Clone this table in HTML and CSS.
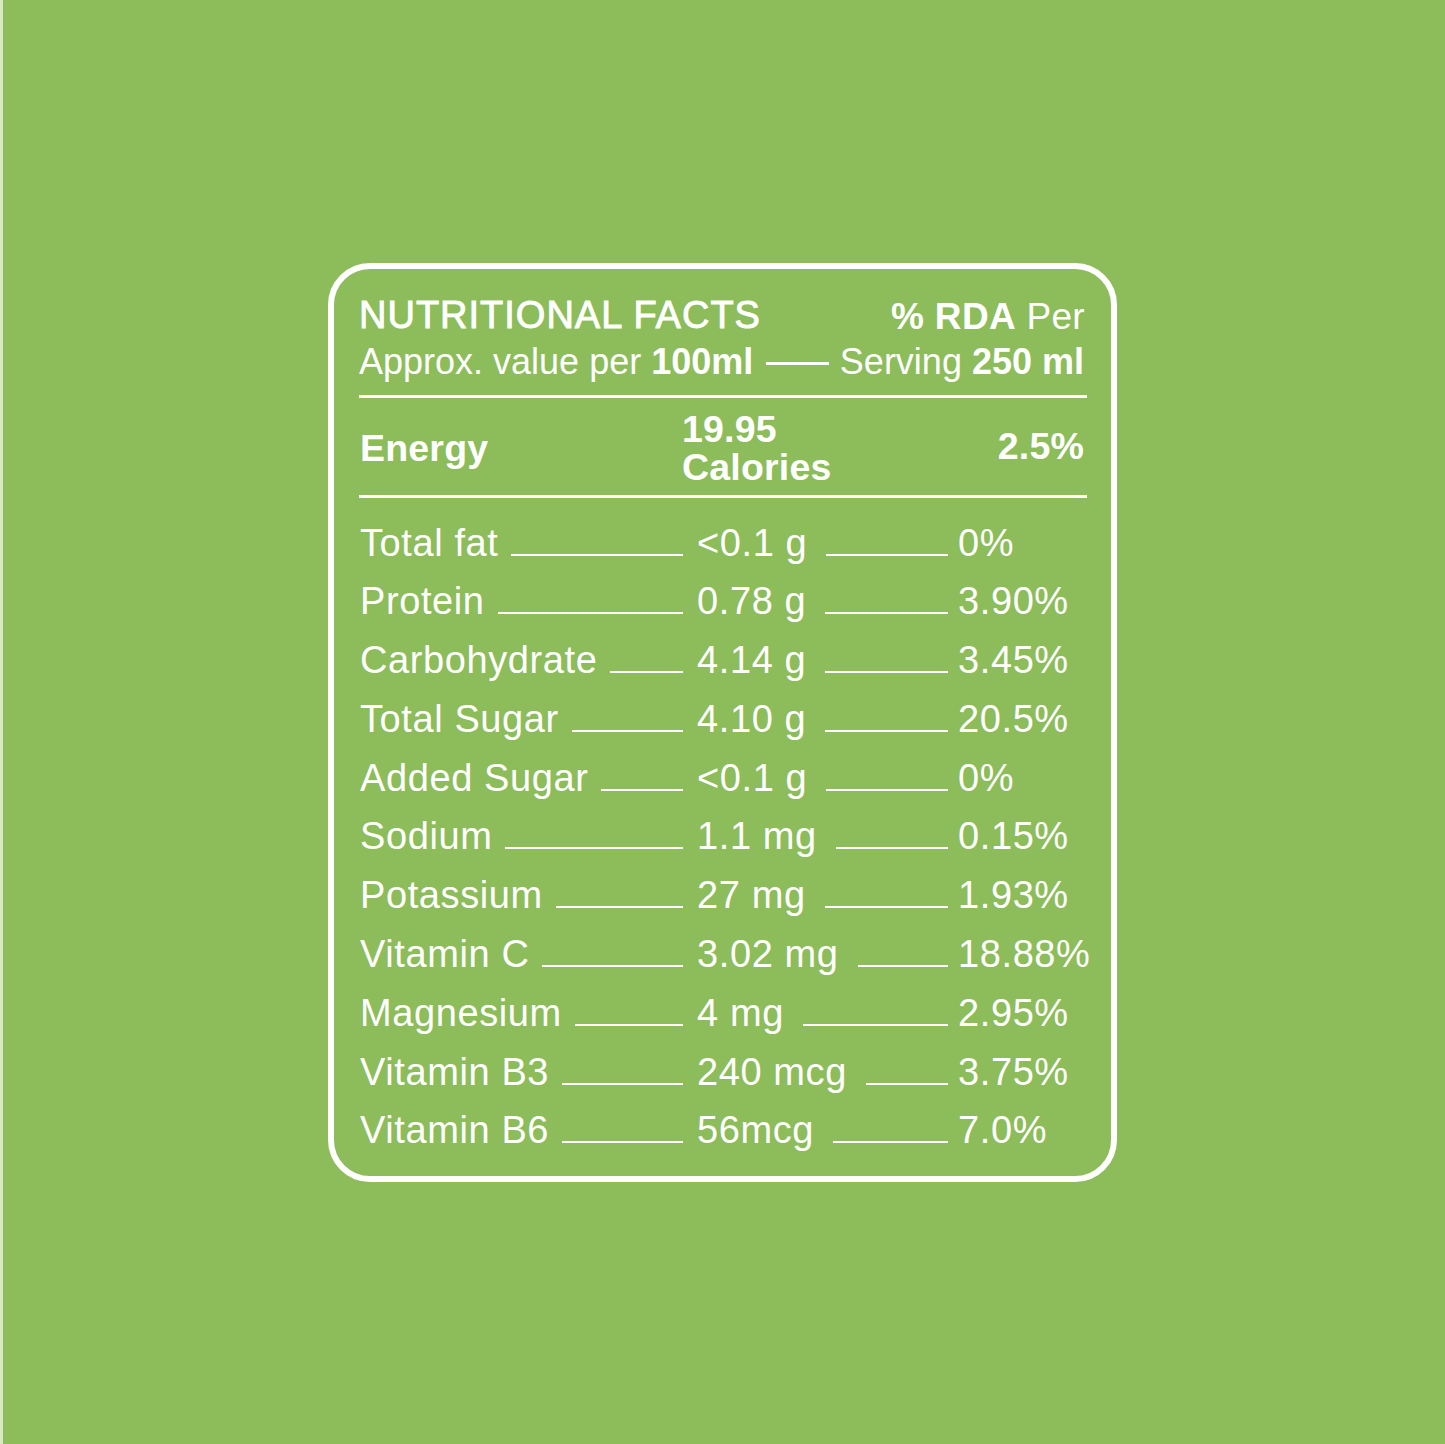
FILE: index.html
```html
<!DOCTYPE html>
<html lang="en">
<head>
<meta charset="utf-8">
<title>Nutritional Facts</title>
<link rel="stylesheet" href="styles.css">
</head>
<body>
<main class="page">
  <section class="card">
    <header class="head">
      <div class="head-top">
        <h1 class="title">NUTRITIONAL FACTS</h1>
        <p class="rda"><b>% RDA</b> Per</p>
      </div>
      <div class="head-sub">
        <span>Approx. value per <b>100ml</b></span>
        <span class="dash"></span>
        <span>Serving <b>250 ml</b></span>
      </div>
    </header>
    <div class="energy">
      <span class="e-name">Energy</span>
      <span class="e-val">19.95<br>Calories</span>
      <span class="e-pct">2.5%</span>
    </div>
    <ul class="rows">
      <li class="row"><span class="cell"><span class="txt">Total fat</span><span class="lead"></span></span><span class="cell"><span class="txt">&lt;0.1 g</span><span class="lead lead2"></span></span><span class="pct">0%</span></li>
      <li class="row"><span class="cell"><span class="txt">Protein</span><span class="lead"></span></span><span class="cell"><span class="txt">0.78 g</span><span class="lead lead2"></span></span><span class="pct">3.90%</span></li>
      <li class="row"><span class="cell"><span class="txt">Carbohydrate</span><span class="lead"></span></span><span class="cell"><span class="txt">4.14 g</span><span class="lead lead2"></span></span><span class="pct">3.45%</span></li>
      <li class="row"><span class="cell"><span class="txt">Total Sugar</span><span class="lead"></span></span><span class="cell"><span class="txt">4.10 g</span><span class="lead lead2"></span></span><span class="pct">20.5%</span></li>
      <li class="row"><span class="cell"><span class="txt">Added Sugar</span><span class="lead"></span></span><span class="cell"><span class="txt">&lt;0.1 g</span><span class="lead lead2"></span></span><span class="pct">0%</span></li>
      <li class="row"><span class="cell"><span class="txt">Sodium</span><span class="lead"></span></span><span class="cell"><span class="txt">1.1 mg</span><span class="lead lead2"></span></span><span class="pct">0.15%</span></li>
      <li class="row"><span class="cell"><span class="txt">Potassium</span><span class="lead"></span></span><span class="cell"><span class="txt">27 mg</span><span class="lead lead2"></span></span><span class="pct">1.93%</span></li>
      <li class="row"><span class="cell"><span class="txt">Vitamin C</span><span class="lead"></span></span><span class="cell"><span class="txt">3.02 mg</span><span class="lead lead2"></span></span><span class="pct">18.88%</span></li>
      <li class="row"><span class="cell"><span class="txt">Magnesium</span><span class="lead"></span></span><span class="cell"><span class="txt">4 mg</span><span class="lead lead2"></span></span><span class="pct">2.95%</span></li>
      <li class="row"><span class="cell"><span class="txt">Vitamin B3</span><span class="lead"></span></span><span class="cell"><span class="txt">240 mcg</span><span class="lead lead2"></span></span><span class="pct">3.75%</span></li>
      <li class="row"><span class="cell"><span class="txt">Vitamin B6</span><span class="lead"></span></span><span class="cell"><span class="txt">56mcg</span><span class="lead lead2"></span></span><span class="pct">7.0%</span></li>
    </ul>
  </section>
</main>
</body>
</html>
```
FILE: styles.css
```css
html, body {
  margin: 0;
  padding: 0;
}
body {
  background: #8dbc5a;
  font-family: "Liberation Sans", Arial, Helvetica, sans-serif;
  color: #ffffff;
}
.page {
  box-sizing: border-box;
  width: 1445px;
  height: 1444px;
  border-left: 3px solid #d8e7c6;
  display: flex;
  align-items: center;
  justify-content: center;
  padding-right: 3px;
}
.card {
  box-sizing: border-box;
  width: 789px;
  height: 919px;
  border: 6px solid #ffffff;
  border-radius: 42px;
  padding: 22px 24px 0 25px;
}
.head {
  border-bottom: 3px solid #ffffff;
  padding-bottom: 10px;
}
.head-top {
  display: flex;
  justify-content: space-between;
  align-items: baseline;
  height: 48px;
}
.title {
  margin: 0;
  font-size: 38px;
  font-weight: 400;
  line-height: 48px;
  letter-spacing: 1px;
  -webkit-text-stroke: 0.9px #ffffff;
}
.rda {
  margin: 0 2px 0 0;
  font-size: 37px;
  line-height: 48px;
  letter-spacing: 0.3px;
  position: relative;
  top: 1px;
}
.head-sub {
  display: flex;
  align-items: center;
  font-size: 36px;
  line-height: 46px;
  white-space: nowrap;
  padding-right: 3px;
}
.dash {
  flex: 1;
  height: 3px;
  background: #ffffff;
  margin: 4px 11px 0 13px;
}
.energy {
  display: grid;
  grid-template-columns: 322px 1fr auto;
  align-items: center;
  padding: 12px 3px 9px 1px;
  border-bottom: 3px solid #ffffff;
  font-weight: 700;
  font-size: 37.5px;
  line-height: 38px;
  letter-spacing: 0.2px;
}
.e-pct {
  position: relative;
  top: -2px;
}
.rows {
  list-style: none;
  margin: 0;
  padding: 16px 0 0 1px;
}
.row {
  display: grid;
  grid-template-columns: 323px 251px 1fr;
  column-gap: 12px;
  font-size: 38px;
  letter-spacing: 0.6px;
  line-height: 58.8px;
  white-space: nowrap;
}
.row .cell:nth-child(2) {
  margin-left: 2px;
  margin-right: -2px;
}
.cell {
  display: flex;
  align-items: flex-start;
}
.lead {
  flex: 1;
  height: 2px;
  background: #ffffff;
  margin: 40px 0 0 13px;
}
.lead2 {
  margin-left: 19px;
}
.pct {
  overflow: visible;
}
```
